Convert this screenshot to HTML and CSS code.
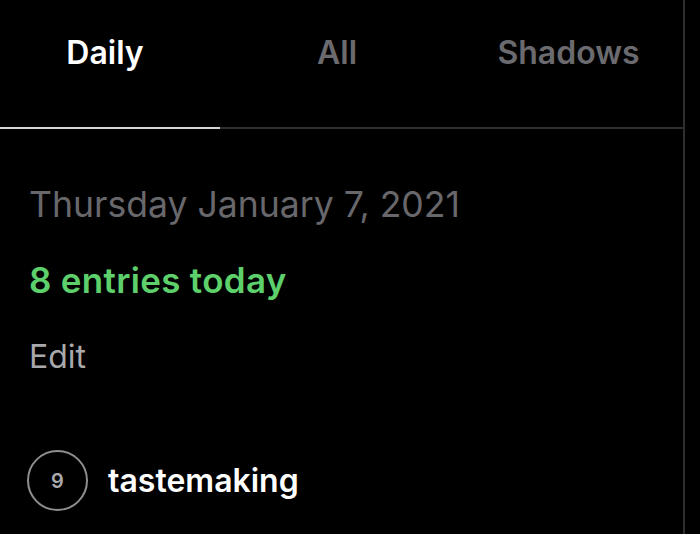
FILE: index.html
```html
<!DOCTYPE html>
<html>
<head>
<meta charset="utf-8">
<link rel="stylesheet" href="styles.css">
</head>
<body>
<div class="app">
  <div class="panel">
    <nav class="tabs">
      <div class="tab tab-daily active">Daily</div>
      <div class="tab tab-all">All</div>
      <div class="tab tab-shadows">Shadows</div>
    </nav>
    <section class="day">
      <div class="date">Thursday January 7, 2021</div>
      <div class="count">8 entries today</div>
      <div class="edit">Edit</div>
      <div class="entry">
        <span class="badge">9</span>
        <span class="entry-name">tastemaking</span>
      </div>
    </section>
  </div>
</div>
</body>
</html>
```
FILE: styles.css
```css
html, body {
  margin: 0;
  padding: 0;
  background: #000;
  height: 100%;
}
body {
  font-family: Inter, "Noto Sans", sans-serif;
  overflow: hidden;
}
.app {
  display: flex;
  height: 534px;
}
.panel {
  width: 683px;
  border-right: 2px solid #2e2e2e;
  display: flex;
  flex-direction: column;
}
.tabs {
  display: flex;
  height: 127px;
  border-bottom: 2px solid #2e2e2e;
}
.tab {
  display: flex;
  justify-content: center;
  align-items: flex-start;
  box-sizing: border-box;
  padding-top: 33px;
  font-size: 32px;
  line-height: 40px;
  font-weight: 600;
  color: #6b6b6f;
  height: 129px;
  border-bottom: 2px solid transparent;
}
.tab-daily { width: 220px; padding-right: 10px; }
.tab-all { width: 234px; }
.tab-shadows { width: 229px; }
.tab.active {
  color: #fff;
  border-bottom-color: #d4d4d4;
}
.day {
  padding: 0 30px 0 29px;
  display: flex;
  flex-direction: column;
}
.date {
  margin-top: 56px;
  font-size: 35.6px;
  line-height: 40px;
  color: #68686c;
  font-weight: 400;
}
.count {
  margin-top: 35px;
  font-size: 35px;
  line-height: 40px;
  font-weight: 600;
  letter-spacing: 0.3px;
  color: #5dd06c;
}
.edit {
  margin-top: 37px;
  font-size: 32px;
  line-height: 40px;
  color: #a9a9ab;
}
.entry {
  margin-top: 73px;
  display: flex;
  align-items: center;
  gap: 20px;
}
.badge {
  width: 57px;
  height: 57px;
  border: 2px solid #8e8e90;
  border-radius: 50%;
  display: flex;
  align-items: center;
  justify-content: center;
  font-size: 20px;
  font-weight: 600;
  color: #a9a9ab;
  margin-left: -2px;
}
.entry-name {
  font-size: 32px;
  font-weight: 600;
  color: #fff;
}
```
